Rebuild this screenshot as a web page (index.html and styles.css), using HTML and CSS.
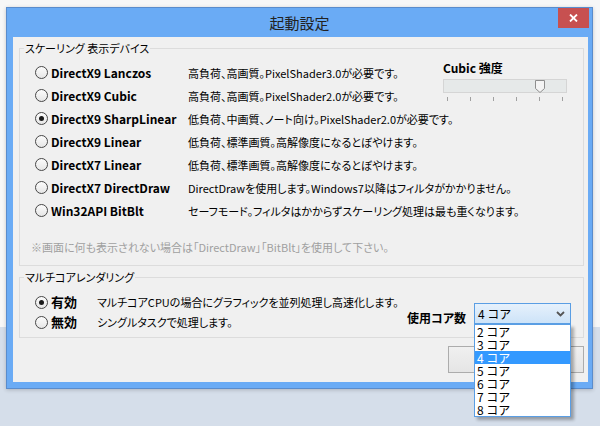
FILE: index.html
```html
<!DOCTYPE html>
<html lang="ja">
<head>
<meta charset="utf-8">
<title>起動設定</title>
<link rel="stylesheet" href="styles.css">
</head>
<body>
<div class="window">
  <div class="titlebar">
    <span class="title">起動設定</span>
    <div class="close">
      <svg width="9" height="8" viewBox="0 0 9 8"><path d="M1 0.5 L8 7.5 M8 0.5 L1 7.5" stroke="#fff" stroke-width="1.8" fill="none"/></svg>
    </div>
  </div>
  <div class="client">
    <fieldset class="group g1">
      <legend>スケーリング 表示デバイス</legend>
      <div class="devices">
        <div class="opt"><span class="radio"></span><b>DirectX9 Lanczos</b></div>
        <div class="desc">高負荷、高画質。PixelShader3.0が必要です。</div>
        <div class="cubic">
          <div class="cubic-title">Cubic 強度</div>
          <div class="slider">
            <svg class="thumb" width="10" height="13" viewBox="0 0 10 13"><polygon points="0.5,0.5 9.5,0.5 9.5,8.5 5,12.5 0.5,8.5" fill="#f4f4f4" stroke="#8e8e8e"/></svg>
          </div>
          <div class="ticks"><i></i><i></i><i></i><i></i><i></i><i></i></div>
        </div>
        <div class="opt"><span class="radio"></span><b>DirectX9 Cubic</b></div>
        <div class="desc">高負荷、高画質。PixelShader2.0が必要です。</div>
        <div class="opt"><span class="radio on"></span><b>DirectX9 SharpLinear</b></div>
        <div class="desc wide">低負荷、中画質、ノート向け。PixelShader2.0が必要です。</div>
        <div class="opt"><span class="radio"></span><b>DirectX9 Linear</b></div>
        <div class="desc wide">低負荷、標準画質。高解像度になるとぼやけます。</div>
        <div class="opt"><span class="radio"></span><b>DirectX7 Linear</b></div>
        <div class="desc wide">低負荷、標準画質。高解像度になるとぼやけます。</div>
        <div class="opt"><span class="radio"></span><b>DirectX7 DirectDraw</b></div>
        <div class="desc wide">DirectDrawを使用します。Windows7以降はフィルタがかかりません。</div>
        <div class="opt"><span class="radio"></span><b>Win32API BitBlt</b></div>
        <div class="desc wide">セーフモード。フィルタはかからずスケーリング処理は最も重くなります。</div>
      </div>
      <div class="note">※画面に何も表示されない場合は「DirectDraw」「BitBlt」を使用して下さい。</div>
    </fieldset>
    <fieldset class="group g2">
      <legend>マルチコアレンダリング</legend>
      <div class="multi">
        <div class="modes">
          <div class="opt"><span class="radio on"></span><b class="big">有効</b></div>
          <div class="desc">マルチコアCPUの場合にグラフィックを並列処理し高速化します。</div>
          <div class="opt"><span class="radio"></span><b class="big">無効</b></div>
          <div class="desc">シングルタスクで処理します。</div>
        </div>
        <div class="cores">
          <span class="cores-label">使用コア数</span>
          <div class="combo">
            <div class="combo-box">
              <span>4 コア</span>
              <svg width="9" height="6" viewBox="0 0 9 6"><path d="M1 1 L4.5 4.5 L8 1" stroke="#555" stroke-width="1.8" fill="none"/></svg>
            </div>
            <ul class="list">
              <li>2 コア</li>
              <li>3 コア</li>
              <li class="sel">4 コア</li>
              <li>5 コア</li>
              <li>6 コア</li>
              <li>7 コア</li>
              <li>8 コア</li>
            </ul>
          </div>
        </div>
      </div>
    </fieldset>
    <div class="btn"></div>
  </div>
</div>
</body>
</html>
```
FILE: styles.css
```css
* { box-sizing: border-box; }
html, body { margin: 0; }
body {
  width: 600px;
  height: 426px;
  overflow: hidden;
  padding: 7px 0 0 6px;
  background: linear-gradient(#f7f7f7 0, #f7f7f7 327px, #d5deea 327px);
  font-family: "Noto Sans CJK JP", "Noto Sans", sans-serif;
  font-size: 11px;
  line-height: 14px;
  color: #000;
  font-feature-settings: "palt";
  white-space: nowrap;
}
.window {
  position: relative;
  width: 587px;
  height: 382px;
  display: flex;
  flex-direction: column;
  background: #6aabf5;
  border: 1px solid #5a8ccc;
  box-shadow: 0 1px 4px rgba(0, 0, 0, 0.2);
}
.titlebar {
  height: 29px;
  display: flex;
  align-items: center;
  justify-content: center;
}
.title {
  font-size: 15px;
  color: #222;
  font-feature-settings: normal;
}
.close {
  position: absolute;
  top: 0;
  right: 3px;
  width: 31px;
  height: 20px;
  background: #c75050;
  display: flex;
  align-items: center;
  justify-content: center;
}
.client {
  flex: 1;
  margin: 0 4px 6px 6px;
  padding: 4px 4px 0 6px;
  background: #f0f0f0;
}
.group {
  margin: 0;
  padding: 0;
  min-width: 0;
  border: 1px solid #dcdcdc;
}
.group legend {
  margin-left: 4px;
  padding: 0 1px;
  line-height: 14px;
}
.devices {
  padding: 6px 0 0 15px;
  display: grid;
  grid-template-columns: 153px 255px 1fr;
  grid-auto-rows: 23px;
  align-items: center;
}
.opt {
  display: flex;
  align-items: center;
  gap: 3px;
}
.opt b {
  font-weight: 700;
  font-size: 12px;
}
.radio {
  width: 13px;
  height: 13px;
  border-radius: 50%;
  border: 1px solid #474747;
  background: linear-gradient(#fcfcfc, #e6e6e6);
  display: flex;
  align-items: center;
  justify-content: center;
  flex: none;
}
.radio.on::after {
  content: "";
  width: 5px;
  height: 5px;
  border-radius: 50%;
  background: #1a1a1a;
}
.desc.wide { grid-column: 2 / span 2; }
.cubic {
  grid-column: 3;
  grid-row: 1 / span 2;
  align-self: start;
}
.cubic-title {
  font-weight: 700;
  font-size: 12px;
}
.slider {
  position: relative;
  margin-top: 4px;
  width: 124px;
  height: 14px;
  background: #e6e9e9;
  border: 1px solid #d5d5d5;
}
.thumb {
  position: absolute;
  left: 91px;
  top: 0;
}
.ticks {
  width: 124px;
  margin-top: 4px;
  padding: 0 4px;
  display: flex;
  justify-content: space-between;
}
.ticks i {
  width: 1px;
  height: 4px;
  background: #a0a0a0;
}
.note {
  margin-top: 18px;
  padding: 0 0 11px 11px;
  color: #a0a0a0;
}
.g2 { margin-top: 4px; }
.multi {
  display: flex;
  padding: 8px 0 5px 15px;
}
.modes {
  flex: 1;
  min-width: 0;
  display: grid;
  grid-template-columns: 62px auto;
  grid-auto-rows: 20px;
  align-items: center;
}
.opt b.big { font-size: 13px; }
.cores {
  flex: none;
  margin-right: 12px;
  margin-top: 11px;
  display: flex;
  align-items: flex-start;
  gap: 8px;
}
.cores-label {
  margin-top: 8px;
  font-weight: 700;
  font-size: 12px;
}
.combo {
  position: relative;
  width: 97px;
  font-size: 12px;
}
.combo-box {
  height: 21px;
  border: 1px solid #5a9ee4;
  background: linear-gradient(#e6f1fc, #cde3f8);
  display: flex;
  align-items: center;
  justify-content: space-between;
  padding: 0 5px 0 3px;
  font-feature-settings: normal;
}
.list {
  position: absolute;
  top: 100%;
  left: 0;
  width: 97px;
  margin: 0;
  padding: 0;
  list-style: none;
  background: #fff;
  border: 1px solid #5a9ee4;
  box-shadow: 3px 3px 3px rgba(0, 0, 0, 0.3);
  font-feature-settings: normal;
  z-index: 2;
}
.list li {
  height: 13px;
  line-height: 13px;
  padding-left: 2px;
}
.list li.sel {
  background: #3399ff;
  color: #fff;
}
.btn {
  margin: 8px 0 0 auto;
  width: 136px;
  height: 27px;
  border: 1px solid #acacac;
  background: linear-gradient(#f0f0f0, #e5e5e5);
}
```
